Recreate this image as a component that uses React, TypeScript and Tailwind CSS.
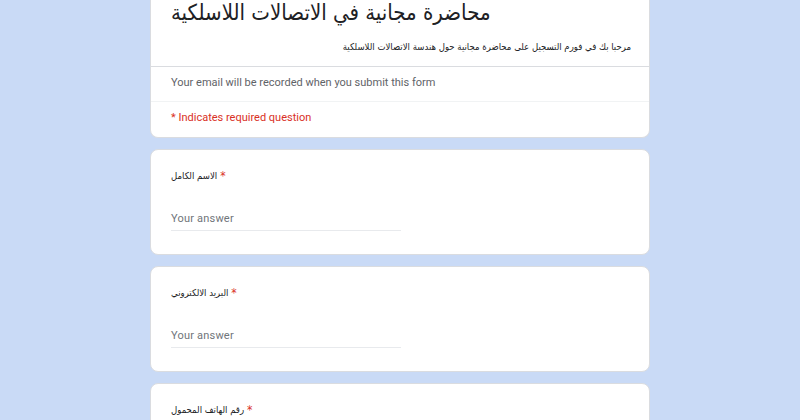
const arabic = { fontFamily: '"DejaVu Sans Condensed", "DejaVu Sans", sans-serif' }
const roboto = { fontFamily: 'Roboto, sans-serif' }

const Question = ({ label }: { label: string }) => {
  return (
    <div className="bg-white rounded-lg border border-[#dadce0] px-5 pt-[18px] pb-[23px]">
      <div className="flex items-center gap-[3px] text-[9.5px] leading-[16px] text-[#202124]" style={arabic}>
        <span>{label}</span>
        <span className="text-[#d93025] text-[12px]">*</span>
      </div>
      <div className="mt-[27px] w-[230px] border-b border-[#e8eaed] pb-[3px] text-[11px] leading-[16px] tracking-[0.2px] text-[#70757a]" style={roboto}>
        Your answer
      </div>
    </div>
  )
}

export default function App() {
  return (
    <div className="min-h-screen w-full bg-[#c9daf6] overflow-hidden">
      <div className="mx-auto w-[500px] flex flex-col gap-[11px] -mt-[2px]">
        <div className="bg-white rounded-b-lg border border-t-0 border-[#dadce0]">
          <div className="pl-5 pr-[18px] pb-[12px]">
            <div className="text-[22px] leading-[30px] text-[#202124]" style={arabic}>
              محاضرة مجانية في الاتصالات اللاسلكية
            </div>
            <div dir="rtl" className="mt-[12px] text-[9.5px] leading-[14px] text-[#202124]" style={arabic}>
              مرحبا بك في فورم التسجيل على محاضرة مجانية حول هندسة الاتصالات اللاسلكية
            </div>
          </div>
          <div className="border-t border-[#dadce0] px-5 pt-[8px] pb-[10px] text-[11px] leading-[16px] text-[#5f6368]" style={roboto}>
            Your email will be recorded when you submit this form
          </div>
          <div className="border-t border-[#f1f3f4] px-5 pt-[8px] pb-[11px] text-[11px] leading-[16px] text-[#d93025]" style={roboto}>
            * Indicates required question
          </div>
        </div>
        <Question label="الاسم الكامل" />
        <Question label="البريد الالكتروني" />
        <Question label="رقم الهاتف المحمول" />
      </div>
    </div>
  )
}
